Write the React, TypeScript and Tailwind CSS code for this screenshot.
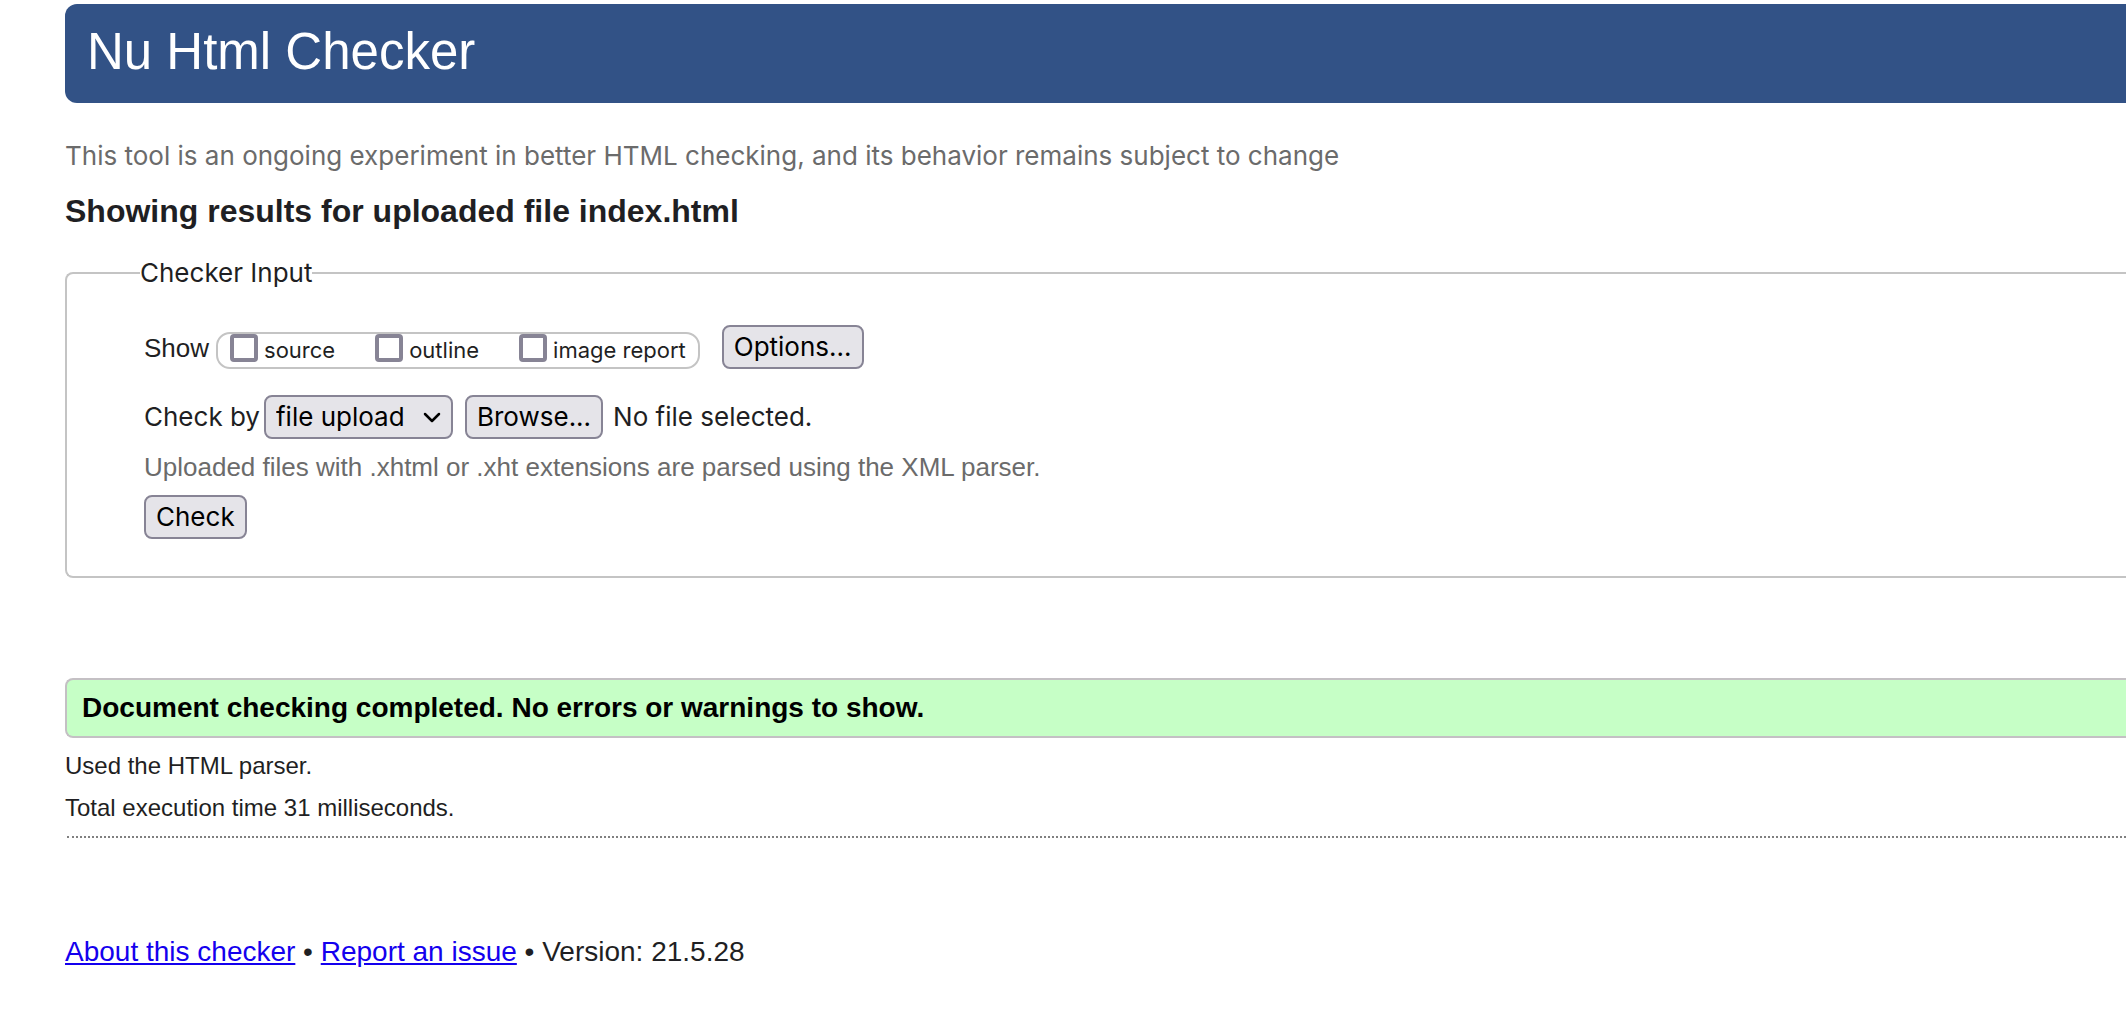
import { useRef, useState } from "react";

const reports = [
  { id: "source", label: "source" },
  { id: "outline", label: "outline" },
  { id: "image-report", label: "image report" },
];

const buttonClass =
  "h-11 rounded-lg border-2 border-[#878495] bg-[#e5e4e9] px-[10px] font-[Inter,sans-serif] text-[26px] leading-8 text-black";

function Header() {
  return (
    <header className="h-[99px] rounded-l-xl bg-[#325286] pl-[22px] pt-[18px]">
      <h1 className="text-[51px] leading-[60px] text-white">Nu Html Checker</h1>
    </header>
  );
}

function ShowRow() {
  return (
    <div className="flex items-end">
      <span className="mr-[7px] h-11 leading-[46px]">Show</span>
      <div className="flex h-[37px] gap-10 rounded-[14px] border-2 border-[#c4c4c4] px-3 font-[Inter,sans-serif] text-[22px] leading-8">
        {reports.map((report) => (
          <label key={report.id} htmlFor={report.id} className="flex gap-[6px]">
            <input
              id={report.id}
              type="checkbox"
              className="size-7 appearance-none rounded-sm border-4 border-[#878495] bg-white checked:bg-[#878495]"
            />
            {report.label}
          </label>
        ))}
      </div>
      <button type="button" className={`${buttonClass} ml-[22px]`}>
        Options...
      </button>
    </div>
  );
}

function CheckByRow() {
  const fileRef = useRef<HTMLInputElement>(null);
  const [fileName, setFileName] = useState("No file selected.");
  return (
    <div className="mt-[26px] flex items-center font-[Inter,sans-serif]">
      <label htmlFor="docselect" className="mr-1">
        Check by
      </label>
      <div className="relative">
        <select id="docselect" className={`${buttonClass} w-[189px] appearance-none`}>
          <option>file upload</option>
          <option>address</option>
          <option>text input</option>
        </select>
        <svg
          className="pointer-events-none absolute right-3 top-[17px]"
          width="18"
          height="12"
          viewBox="0 0 18 12"
          fill="none"
          stroke="black"
          strokeWidth="2.5"
          strokeLinecap="round"
          strokeLinejoin="round"
        >
          <path d="M2 2l7 7 7-7" />
        </svg>
      </div>
      <input
        ref={fileRef}
        id="doc"
        type="file"
        aria-label="Document to check"
        className="hidden"
        onChange={(e) => setFileName(e.target.files?.[0]?.name ?? "No file selected.")}
      />
      <button
        type="button"
        className={`${buttonClass} ml-3 mr-[10px]`}
        onClick={() => fileRef.current?.click()}
      >
        Browse...
      </button>
      <span>{fileName}</span>
    </div>
  );
}

export default function App() {
  return (
    <div className="min-h-screen bg-white pb-6 pl-[65px] pt-1 font-['Liberation_Sans',Arial,sans-serif] text-[26px] leading-8 text-[#1f1f23]">
      <Header />
      <p className="mt-[37px] font-[Inter,sans-serif] text-[#6b6b6b]">
        This tool is an ongoing experiment in better HTML checking, and its behavior remains subject to change
      </p>
      <h2 className="mt-[19px] text-[32px] font-bold leading-10">
        Showing results for uploaded file index.html
      </h2>
      <form onSubmit={(e) => e.preventDefault()}>
        <fieldset className="mt-[26px] rounded-l-lg border-2 border-r-0 border-[#c4c4c4] pb-[37px] pl-[77px] pt-[36px]">
          <legend className="-ml-1 font-[Inter,sans-serif]">Checker Input</legend>
          <ShowRow />
          <CheckByRow />
          <p className="mt-3 text-[#6b6b6b]">
            Uploaded files with .xhtml or .xht extensions are parsed using the XML parser.
          </p>
          <button type="submit" className={`${buttonClass} mt-3`}>
            Check
          </button>
        </fieldset>
      </form>
      <p className="mt-[100px] rounded-l-lg border-2 border-r-0 border-[#c4c0c4] bg-[#c6ffc6] px-[15px] py-3 text-[28px] font-bold leading-8 text-black">
        Document checking completed. No errors or warnings to show.
      </p>
      <div className="mt-3 text-2xl leading-8">
        <p>Used the HTML parser.</p>
        <p className="mt-[10px]">Total execution time 31 milliseconds.</p>
      </div>
      <hr className="ml-[2px] mt-3 border-t-2 border-dotted border-[#808080]" />
      <footer className="mt-[98px] text-[28px]">
        <a href="#about" className="text-[#1400ee] underline">About this checker</a>
        {" • "}
        <a href="#issue" className="text-[#1400ee] underline">Report an issue</a>
        {" • Version: 21.5.28"}
      </footer>
    </div>
  );
}
